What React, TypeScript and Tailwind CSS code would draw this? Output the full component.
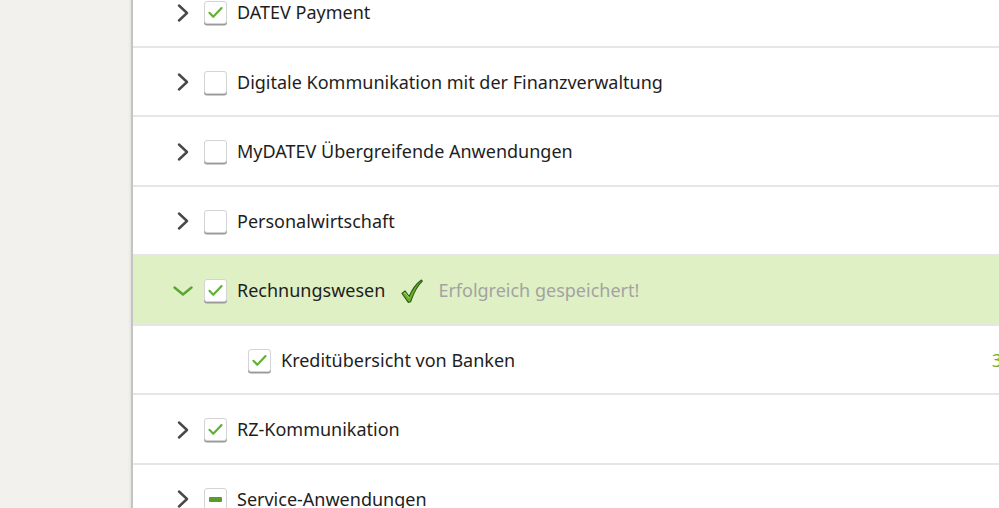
type Row = {
    name: string
    state: 'checked' | 'empty' | 'partial'
    open?: boolean
    saved?: boolean
    child?: boolean
    count?: string
}

const rows: Row[] = [
    { name: 'DATEV Payment', state: 'checked' },
    { name: 'Digitale Kommunikation mit der Finanzverwaltung', state: 'empty' },
    { name: 'MyDATEV Übergreifende Anwendungen', state: 'empty' },
    { name: 'Personalwirtschaft', state: 'empty' },
    { name: 'Rechnungswesen', state: 'checked', open: true, saved: true },
    { name: 'Kreditübersicht von Banken', state: 'checked', child: true, count: '3' },
    { name: 'RZ-Kommunikation', state: 'checked' },
    { name: 'Service-Anwendungen', state: 'partial' },
]

function Box({ state }: { state: Row['state'] }) {
    return (
        <div className="flex h-[23px] w-[23px] shrink-0 items-center justify-center rounded-[3px] border border-[#d4d4d4] bg-white shadow-[0_1.5px_0_#9a9a9a]">
            {state === 'checked' && (
                <svg width="17" height="17" viewBox="0 0 16 16" fill="none">
                    <path d="M2.3 8.3l3.6 3.7 7.8-8.2" stroke="#5fb132" strokeWidth="2" strokeLinecap="round" strokeLinejoin="round" />
                </svg>
            )}
            {state === 'partial' && <div className="h-[5px] w-[13px] rounded-[1px] bg-[#5a9c2a]" />}
        </div>
    )
}

function Chevron({ open }: { open?: boolean }) {
    return open ? (
        <svg width="20" height="10" viewBox="0 0 20 10" fill="none">
            <path d="M1.5 1.5l8.5 7 8.5-7" stroke="#5aa632" strokeWidth="2.4" strokeLinecap="round" strokeLinejoin="round" />
        </svg>
    ) : (
        <svg width="12" height="18" viewBox="0 0 12 18" fill="none">
            <path d="M2 1.5l8 7.5-8 7.5" stroke="#484848" strokeWidth="2.4" strokeLinecap="round" strokeLinejoin="round" />
        </svg>
    )
}

function SavedCheck() {
    return (
        <svg width="22" height="24" viewBox="0 0 22 24">
            <path
                d="M1 14.5l3-2.6 4.2 5.6C11 10.5 15.2 4.8 20.4 1l.9 1.2C16.2 7 12.6 14 9.6 22.8l-2.3.6z"
                fill="#6cb12c"
                stroke="#2f5a14"
                strokeWidth="1.1"
                strokeLinejoin="round"
            />
            <path d="M2.8 14.6l1.2-1 4.3 5.4" stroke="#a7d96a" strokeWidth="1" fill="none" />
        </svg>
    )
}

export default function App() {
    return (
        <div className="flex h-[508px] w-[999px] overflow-hidden bg-white font-['Noto_Sans',sans-serif] text-[18px] text-[#1e1e1e]">
            <div className="w-[131px] shrink-0 bg-[#f2f1ee] shadow-[inset_-3px_0_3px_-2px_#e2e1dd]" />
            <div className="w-[2px] shrink-0 bg-[#c4c4c4]" />
            <div className="-mt-[22px] flex-1">
                {rows.map((row) => (
                    <div
                        key={row.name}
                        className={`flex h-[69.5px] items-center border-b-2 border-[#e6e6e6] pt-[2px] ${row.open ? 'bg-[#dff0c4]' : ''} ${row.child ? 'pl-[115px]' : 'pl-[40px]'}`}
                    >
                        {!row.child && (
                            <div className="mr-[11px] flex w-[20px] justify-center">
                                <Chevron open={row.open} />
                            </div>
                        )}
                        <Box state={row.state} />
                        <span className="ml-[10px]">{row.name}</span>
                        {row.saved && (
                            <div className="ml-[16px] flex items-center gap-[15px]">
                                <SavedCheck />
                                <span className="text-[#a3a3a3]">Erfolgreich gespeichert!</span>
                            </div>
                        )}
                        {row.count && <span className="-mr-[3px] ml-auto text-[#6cb12c]">{row.count}</span>}
                    </div>
                ))}
            </div>
        </div>
    )
}
